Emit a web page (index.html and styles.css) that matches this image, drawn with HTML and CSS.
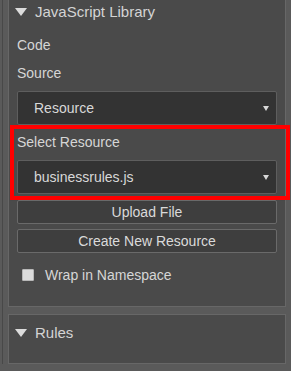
FILE: index.html
```html
<!DOCTYPE html>
<html lang="en">

<head>
    <meta charset="UTF-8">
    <title>JavaScript Library</title>
    <link rel="stylesheet" href="styles.css">
</head>

<body>
    <div class="sidebar">
        <div class="panel panel-first">
            <div class="panel-header">
                <span class="caret"></span>
                <span class="panel-title">JavaScript Library</span>
            </div>
            <div class="panel-body">
                <div class="label label-first">Code</div>
                <div class="label">Source</div>
                <div class="select">
                    <span>Resource</span>
                    <span class="select-arrow"></span>
                </div>

                <!-- highlighted field -->
                <div class="highlight">
                    <div class="label label-first">Select Resource</div>
                    <div class="select">
                        <span>businessrules.js</span>
                        <span class="select-arrow"></span>
                    </div>
                </div>

                <button class="btn">Upload File</button>
                <button class="btn btn-spaced">Create New Resource</button>

                <label class="check-row">
                    <span class="checkbox"></span>
                    <span>Wrap in Namespace</span>
                </label>
            </div>
        </div>

        <div class="panel">
            <div class="panel-header">
                <span class="caret"></span>
                <span class="panel-title">Rules</span>
            </div>
        </div>
    </div>
</body>

</html>
```

FILE: styles.css
```css
body {
    margin: 0;
    background: #5a5a5a;
    color: #d6d6d6;
    font-family: 'Liberation Sans', Arial, sans-serif;
    font-size: 14px;
    height: 371px;
    overflow: hidden;
}

.sidebar {
    margin-left: 2px;
    border-left: 1px solid #484848;
    padding-left: 5px;
    padding-right: 5px;
    height: 371px;
}

.panel {
    background: #4a4a4a;
    border: 1px solid #676767;
    margin-top: 7px;
}

.panel-first {
    margin-top: -7px;
}

.panel-header {
    display: flex;
    align-items: center;
    gap: 8px;
    padding: 8px 0 20px 6px;
    height: 20px;
    font-size: 15px;
    line-height: 20px;
}

.panel-first .panel-header {
    padding-bottom: 0;
}

.caret {
    width: 0;
    height: 0;
    border-left: 6.5px solid transparent;
    border-right: 6.5px solid transparent;
    border-top: 8px solid #dcdcdc;
}

.panel-title {
    color: #d4d4d4;
}

.panel-body {
    padding: 0 8px 22px 8px;
}

.label {
    line-height: 18px;
    margin-top: 10px;
}

.label-first {
    margin-top: 14px;
}

.highlight .label-first {
    margin-top: 0;
}

.select {
    display: flex;
    align-items: center;
    justify-content: space-between;
    height: 32px;
    margin-top: 9px;
    padding: 0 7px 0 16px;
    background: #333333;
    border: 1px solid #5e5e5e;
    border-radius: 2px;
    color: #d8d8d8;
}

.select-arrow {
    width: 0;
    height: 0;
    border-left: 3px solid transparent;
    border-right: 3px solid transparent;
    border-top: 5px solid #d8d8d8;
}

.highlight {
    border: 4px solid #ff0000;
    margin: 0 -13px 0 -7px;
    padding: 4px 9px 2px 3px;
}

.btn {
    display: block;
    width: 100%;
    height: 24px;
    padding: 0;
    background: #3e3e3e;
    border: 1px solid #6a6a6a;
    border-radius: 2px;
    color: #dadada;
    font-family: inherit;
    font-size: 14px;
}

.btn-spaced {
    margin-top: 5px;
}

.check-row {
    display: flex;
    align-items: center;
    gap: 11px;
    margin-top: 13px;
    padding-left: 5px;
    line-height: 18px;
}

.checkbox {
    width: 10px;
    height: 10px;
    background: #dcdcdc;
    border: 1px solid #b8b8b8;
    border-radius: 1px;
}
```
